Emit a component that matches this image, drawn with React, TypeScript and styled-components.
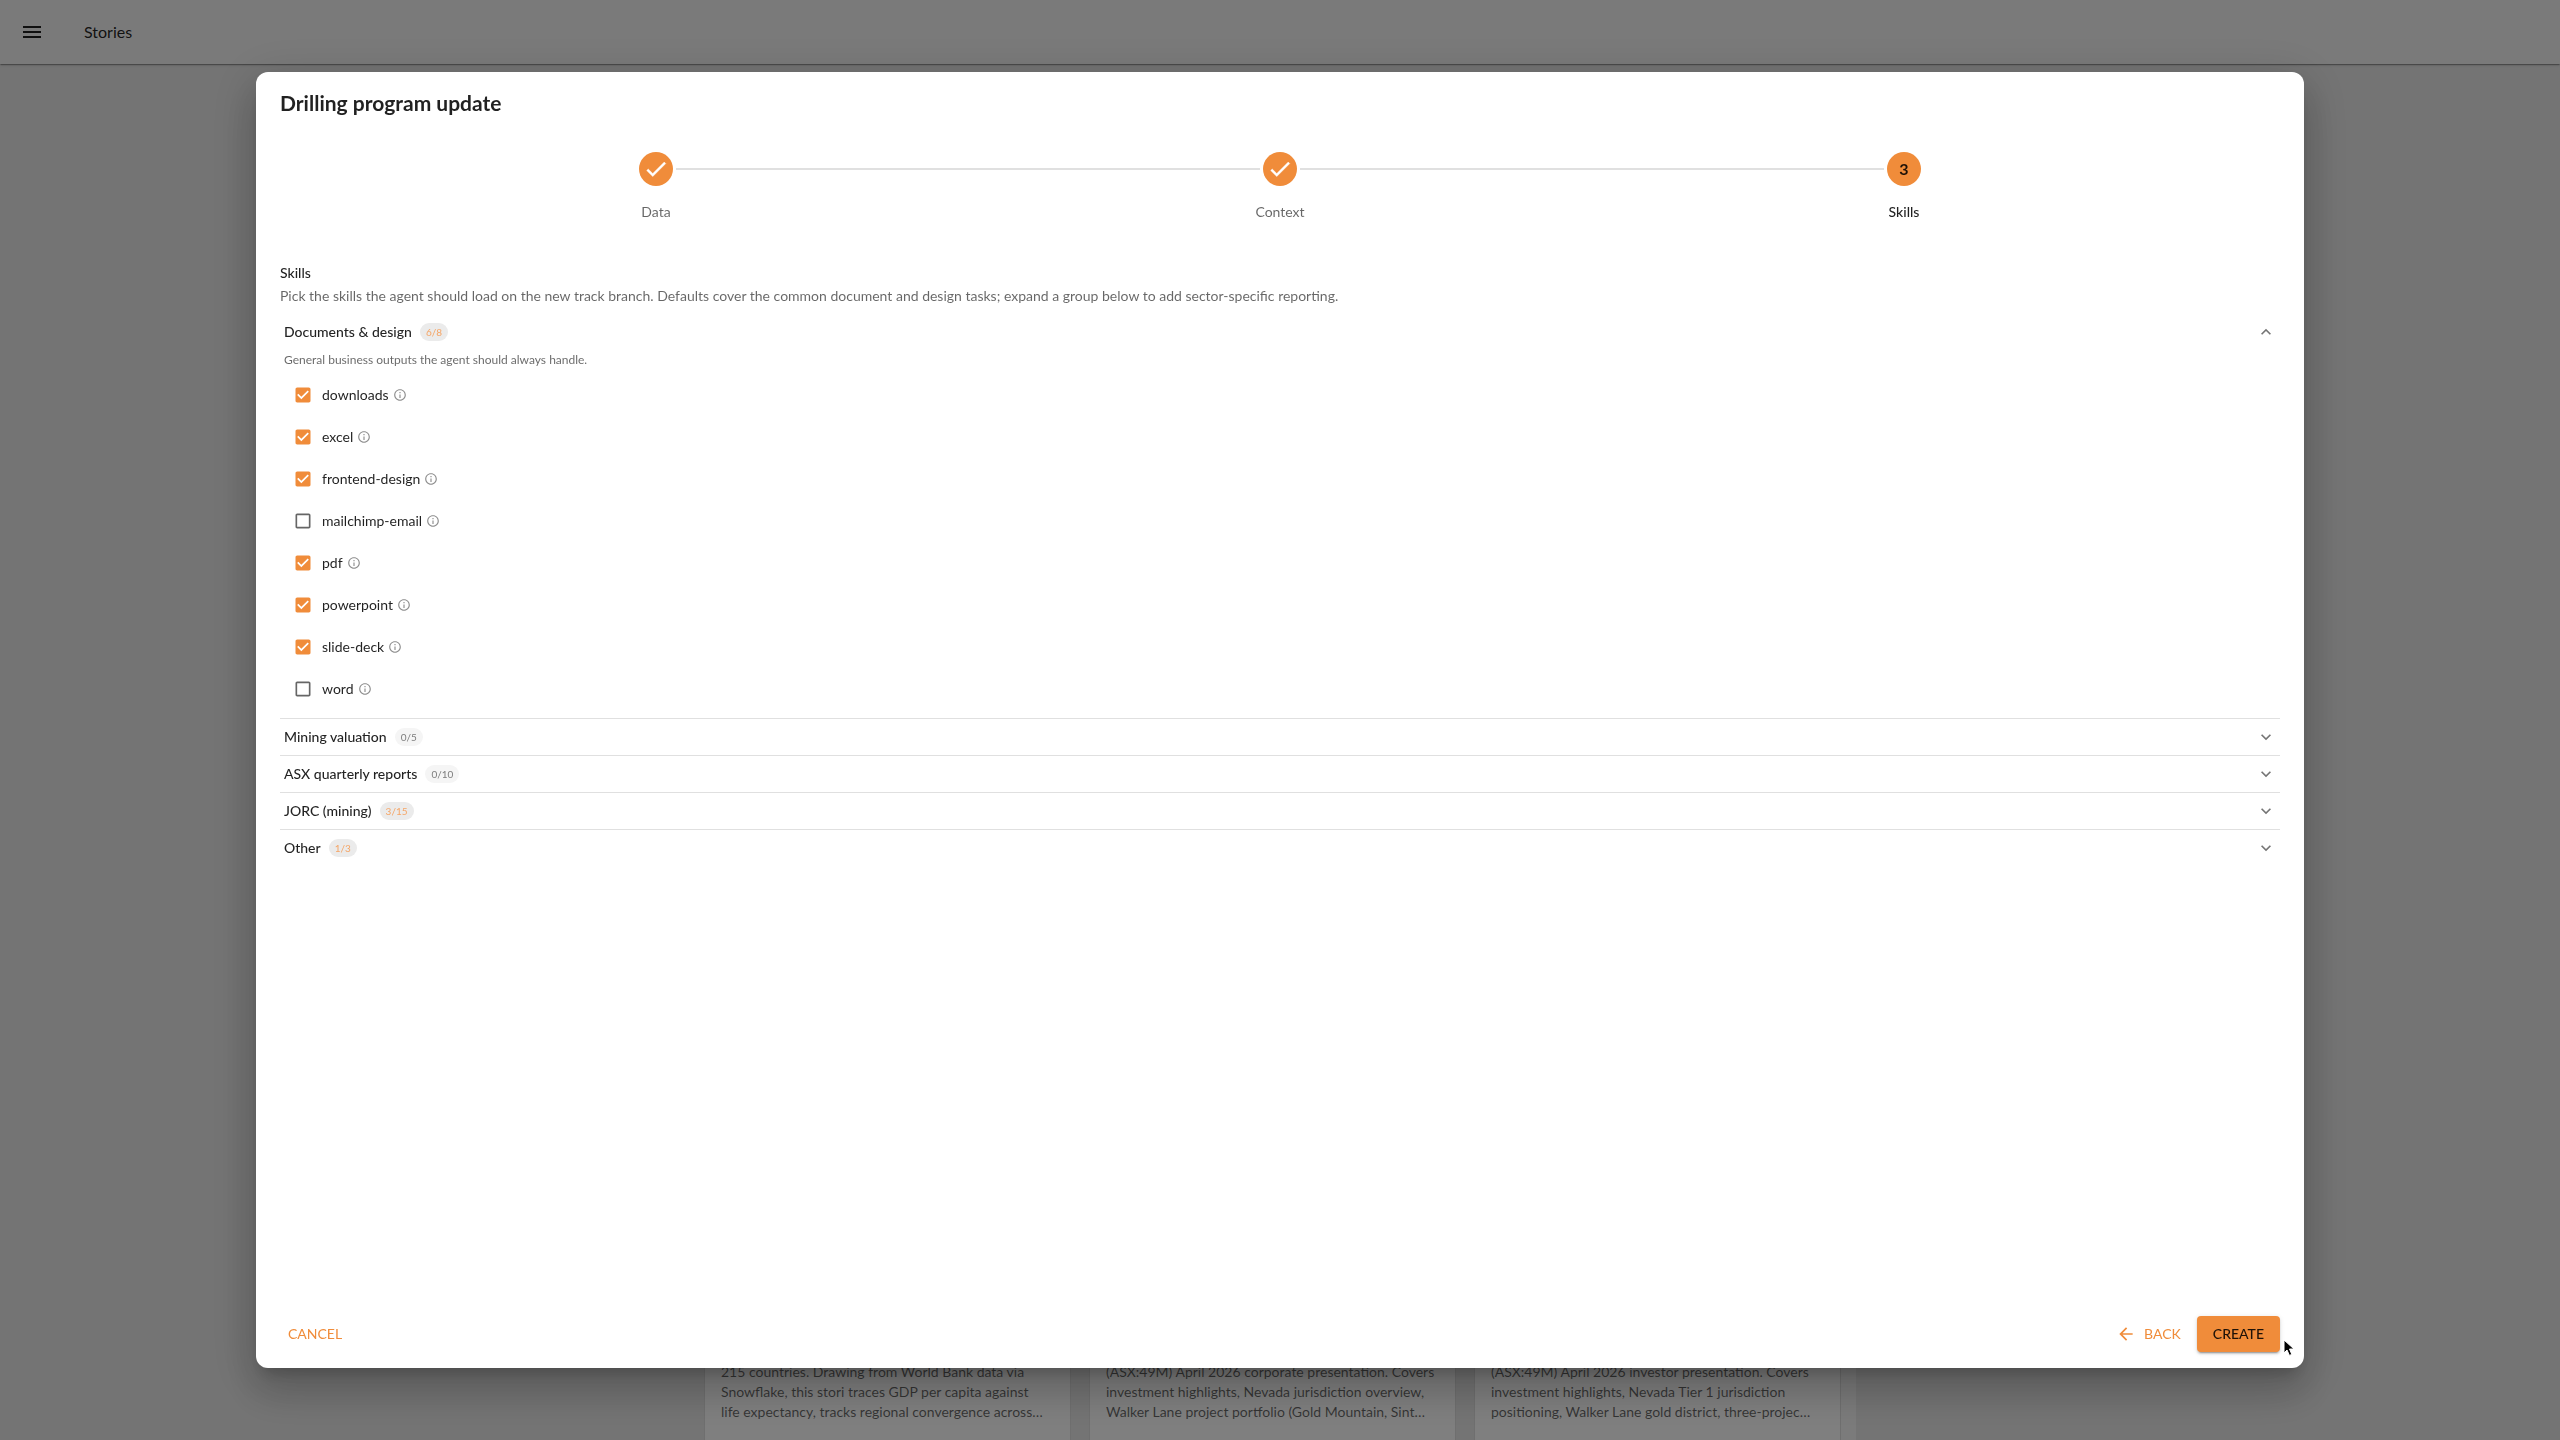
import React, { useState } from "react";
import styled, { createGlobalStyle } from "styled-components";

const orange = "#f08c3a";
const ink = "rgba(0, 0, 0, 0.87)";
const muted = "rgba(0, 0, 0, 0.6)";
const line = "#e0e0e0";

const GlobalStyle = createGlobalStyle`
  *, *::before, *::after { box-sizing: border-box; }
  body {
    margin: 0;
    background: #e8e8e8;
    color: ${ink};
    font-family: Lato, "Liberation Sans", sans-serif;
    font-size: 14px;
    line-height: 20px;
  }
  button { font: inherit; color: inherit; border: 0; background: none; padding: 0; cursor: pointer; }
  h1, h2, h3, p, ul, ol { margin: 0; padding: 0; font-weight: inherit; font-size: inherit; }
  ul, ol { list-style: none; }
`;

const Page = styled.div`
  display: flex;
  flex-direction: column;
  height: 100vh;
  overflow: hidden;
`;

const AppBar = styled.header`
  display: flex;
  align-items: center;
  gap: 40px;
  flex: none;
  height: 64px;
  padding: 0 20px;
  background: #f4f4f4;
  font-size: 16px;
  box-shadow: 0 2px 1px -1px rgba(0, 0, 0, 0.2), 0 1px 1px rgba(0, 0, 0, 0.14), 0 1px 3px rgba(0, 0, 0, 0.12);
`;

const MenuButton = styled.button`
  display: flex;
`;

const Board = styled.main`
  display: flex;
  flex: 1;
  flex-direction: column;
  justify-content: flex-end;
  align-self: center;
  width: 45%;
  min-height: 0;
`;

const CardGrid = styled.div`
  display: grid;
  grid-template-columns: repeat(3, minmax(0, 1fr));
  gap: 18px;
  border-right: 15px solid #f6f6f6;
`;

const Card = styled.article`
  padding: 0 16px 18px;
  background: #fff;
  border: solid #dedede;
  border-width: 0 1px;
  color: ${muted};
`;

const CardLine = styled.span`
  display: block;
  white-space: nowrap;
`;

const Backdrop = styled.div`
  position: fixed;
  inset: 0;
  display: flex;
  align-items: center;
  justify-content: center;
  background: rgba(0, 0, 0, 0.5);
`;

const Dialog = styled.section`
  display: flex;
  flex-direction: column;
  width: 80%;
  height: 90%;
  background: #fff;
  border-radius: 12px;
  box-shadow: 0 11px 15px -7px rgba(0, 0, 0, 0.2), 0 24px 38px 3px rgba(0, 0, 0, 0.14),
    0 9px 46px 8px rgba(0, 0, 0, 0.12);
`;

const Title = styled.h1`
  padding: 16px 24px;
  font-size: 21px;
  font-weight: 700;
  line-height: 30px;
`;

const Steps = styled.ol`
  display: flex;
  flex: none;
  padding: 18px 88px 40px;
`;

const Step = styled.li<{ $current?: boolean }>`
  display: grid;
  flex: 1;
  grid-template-columns: 1fr 34px 1fr;
  column-gap: 3px;
  row-gap: 16px;
  align-items: center;
  color: ${(p) => (p.$current ? ink : muted)};
  font-weight: ${(p) => (p.$current ? 500 : 400)};
`;

const Track = styled.span<{ $visible: boolean }>`
  height: 2px;
  background: ${(p) => (p.$visible ? line : "transparent")};
`;

const StepDot = styled.span`
  display: grid;
  place-items: center;
  height: 34px;
  border-radius: 50%;
  background: ${orange};
  color: ${ink};
  font-size: 16px;
  font-weight: 700;
`;

const StepLabel = styled.span`
  grid-column: 1 / -1;
  text-align: center;
`;

const CheckSvg = styled.svg`
  color: #fff;
`;

const Content = styled.div`
  flex: 1;
  min-height: 0;
  padding: 0 24px;
  overflow: auto;
`;

const SectionTitle = styled.h2`
  line-height: 22px;
  font-weight: 500;
`;

const Description = styled.p`
  line-height: 24px;
  margin-bottom: 6px;
  color: ${muted};
`;

const Group = styled.section`
  border-bottom: 1px solid ${line};
  &:last-child { border-bottom: 0; }
`;

const GroupHeader = styled.button`
  display: flex;
  align-items: center;
  gap: 8px;
  width: 100%;
  height: 36px;
  padding: 0 4px;
  text-align: left;
  font-weight: 500;
`;

const Badge = styled.span<{ $active: boolean }>`
  height: 18px;
  padding: 0 6px;
  border-radius: 9px;
  background: ${(p) => (p.$active ? "#ebebeb" : "#f5f5f5")};
  color: ${(p) => (p.$active ? "#f5a566" : "#7d7d7d")};
  font-size: 10px;
  font-weight: 400;
  line-height: 18px;
`;

const ChevronSlot = styled.span<{ $open: boolean }>`
  display: flex;
  margin-left: auto;
  color: #757575;
  transform: ${(p) => (p.$open ? "rotate(180deg)" : "none")};
`;

const GroupHint = styled.p`
  padding: 0 4px 4px;
  color: ${muted};
  font-size: 12px;
`;

const SkillList = styled.ul`
  padding: 0 4px 8px;
`;

const SkillRow = styled.li`
  display: flex;
  align-items: center;
  gap: 4px;
  height: 42px;
`;

const SkillLabel = styled.label`
  display: flex;
  align-items: center;
  cursor: pointer;
`;

const CheckCell = styled.span`
  display: grid;
  place-items: center;
  width: 38px;
  height: 38px;
  & > * { grid-area: 1 / 1; }
`;

const CheckInput = styled.input`
  appearance: none;
  width: 20px;
  height: 20px;
  margin: 0;
`;

const CheckColor = styled.span<{ $on: boolean }>`
  display: flex;
  pointer-events: none;
  color: ${(p) => (p.$on ? orange : "#666")};
`;

const InfoButton = styled.button`
  display: flex;
  color: #8e8e8e;
`;

const Footer = styled.footer`
  display: flex;
  align-items: center;
  flex: none;
  gap: 8px;
  padding: 16px 24px;
`;

const TextButton = styled.button<{ $push?: boolean }>`
  display: flex;
  align-items: center;
  gap: 8px;
  height: 36px;
  padding: 0 8px;
  margin-right: ${(p) => (p.$push ? "auto" : "0")};
  color: ${orange};
`;

const CreateButton = styled.button`
  height: 36px;
  padding: 0 16px;
  border-radius: 4px;
  background: ${orange};
  color: ${ink};
  font-weight: 500;
  box-shadow: 0 3px 1px -2px rgba(0, 0, 0, 0.2), 0 2px 2px rgba(0, 0, 0, 0.14), 0 1px 5px rgba(0, 0, 0, 0.12);
`;

const Pointer = styled.svg`
  position: fixed;
  left: 2283px;
  top: 1339px;
  pointer-events: none;
`;

const Icon = ({ d, size }: { d: string; size: number }) => (
  <svg width={size} height={size} viewBox="0 0 24 24" fill="currentColor" aria-hidden="true">
    <path d={d} />
  </svg>
);

const icons = {
  menu: "M3 18h18v-2H3v2zm0-5h18v-2H3v2zm0-7v2h18V6H3z",
  check: "M9 16.17 4.83 12l-1.42 1.41L9 19 21 7l-1.41-1.41z",
  expand: "M16.59 8.59 12 13.17 7.41 8.59 6 10l6 6 6-6z",
  boxOn: "M19 3H5c-1.11 0-2 .9-2 2v14c0 1.1.89 2 2 2h14c1.11 0 2-.9 2-2V5c0-1.1-.89-2-2-2zm-9 14-5-5 1.41-1.41L10 14.17l7.59-7.59L19 8l-9 9z",
  boxOff: "M19 5v14H5V5h14m0-2H5c-1.1 0-2 .9-2 2v14c0 1.1.9 2 2 2h14c1.1 0 2-.9 2-2V5c0-1.1-.9-2-2-2z",
  info: "M11 7h2v2h-2zm0 4h2v6h-2zm1-9C6.48 2 2 6.48 2 12s4.48 10 10 10 10-4.48 10-10S17.52 2 12 2zm0 18c-4.41 0-8-3.59-8-8s3.59-8 8-8 8 3.59 8 8-3.59 8-8 8z",
  back: "M20 11H7.83l5.59-5.59L12 4l-8 8 8 8 1.41-1.41L7.83 13H20v-2z",
};

const CheckMark = () => (
  <CheckSvg width="26" height="26" viewBox="0 0 24 24" fill="currentColor" stroke="currentColor" strokeWidth="0.4" aria-hidden="true">
    <path d={icons.check} />
  </CheckSvg>
);

const stories = [
  ["215 countries. Drawing from World Bank data via", "Snowflake, this stori traces GDP per capita against", "life expectancy, tracks regional convergence across…"],
  ["(ASX:49M) April 2026 corporate presentation. Covers", "investment highlights, Nevada jurisdiction overview,", "Walker Lane project portfolio (Gold Mountain, Sint…"],
  ["(ASX:49M) April 2026 investor presentation. Covers", "investment highlights, Nevada Tier 1 jurisdiction", "positioning, Walker Lane gold district, three-projec…"],
];

const skills = ["downloads", "excel", "frontend-design", "mailchimp-email", "pdf", "powerpoint", "slide-deck", "word"];

const otherGroups = [
  { name: "Mining valuation", picked: 0, total: 5 },
  { name: "ASX quarterly reports", picked: 0, total: 10 },
  { name: "JORC (mining)", picked: 3, total: 15 },
  { name: "Other", picked: 1, total: 3 },
];

const stepNames = ["Data", "Context", "Skills"];

export default function App() {
  const [picked, setPicked] = useState(() => skills.filter((s) => s !== "mailchimp-email" && s !== "word"));
  const [open, setOpen] = useState(true);
  const toggle = (s: string) => setPicked((p) => (p.includes(s) ? p.filter((x) => x !== s) : [...p, s]));

  return (
    <>
      <GlobalStyle />
      <Page>
        <AppBar>
          <MenuButton aria-label="Menu">
            <Icon d={icons.menu} size={24} />
          </MenuButton>
          <span>Stories</span>
        </AppBar>
        <Board>
          <CardGrid>
            {stories.map((lines) => (
              <Card key={lines[2]}>
                {lines.map((text) => (
                  <CardLine key={text}>{text}</CardLine>
                ))}
              </Card>
            ))}
          </CardGrid>
        </Board>
      </Page>

      <Backdrop>
        <Dialog role="dialog" aria-modal="true" aria-labelledby="dialog-title">
          <Title id="dialog-title">Drilling program update</Title>
          <Steps>
            {stepNames.map((name, i) => (
              <Step key={name} $current={i === 2}>
                <Track $visible={i > 0} />
                <StepDot>{i < 2 ? <CheckMark /> : i + 1}</StepDot>
                <Track $visible={i < 2} />
                <StepLabel>{name}</StepLabel>
              </Step>
            ))}
          </Steps>

          <Content>
            <SectionTitle>Skills</SectionTitle>
            <Description>
              Pick the skills the agent should load on the new track branch. Defaults cover the common document and
              design tasks; expand a group below to add sector-specific reporting.
            </Description>
            <Group>
              <GroupHeader aria-expanded={open} onClick={() => setOpen(!open)}>
                Documents &amp; design
                <Badge $active>{picked.length}/{skills.length}</Badge>
                <ChevronSlot $open={open}>
                  <Icon d={icons.expand} size={20} />
                </ChevronSlot>
              </GroupHeader>
              {open && (
                <>
                  <GroupHint>General business outputs the agent should always handle.</GroupHint>
                  <SkillList>
                    {skills.map((s) => {
                      const on = picked.includes(s);
                      return (
                        <SkillRow key={s}>
                          <SkillLabel>
                            <CheckCell>
                              <CheckInput type="checkbox" checked={on} onChange={() => toggle(s)} />
                              <CheckColor $on={on}>
                                <Icon d={on ? icons.boxOn : icons.boxOff} size={20} />
                              </CheckColor>
                            </CheckCell>
                            {s}
                          </SkillLabel>
                          <InfoButton aria-label={`About ${s}`}>
                            <Icon d={icons.info} size={14} />
                          </InfoButton>
                        </SkillRow>
                      );
                    })}
                  </SkillList>
                </>
              )}
            </Group>
            {otherGroups.map((g) => (
              <Group key={g.name}>
                <GroupHeader aria-expanded={false}>
                  {g.name}
                  <Badge $active={g.picked > 0}>{g.picked}/{g.total}</Badge>
                  <ChevronSlot $open={false}>
                    <Icon d={icons.expand} size={20} />
                  </ChevronSlot>
                </GroupHeader>
              </Group>
            ))}
          </Content>

          <Footer>
            <TextButton $push>CANCEL</TextButton>
            <TextButton>
              <Icon d={icons.back} size={20} />
              BACK
            </TextButton>
            <CreateButton>CREATE</CreateButton>
          </Footer>
        </Dialog>
      </Backdrop>

      <Pointer width="12" height="18" viewBox="0 0 12 18" aria-hidden="true">
        <path d="M1 1v13l3-3 2.4 5.4 2.4-1L6.5 10H11z" fill="#000" stroke="#fff" strokeWidth="1" />
      </Pointer>
    </>
  );
}
